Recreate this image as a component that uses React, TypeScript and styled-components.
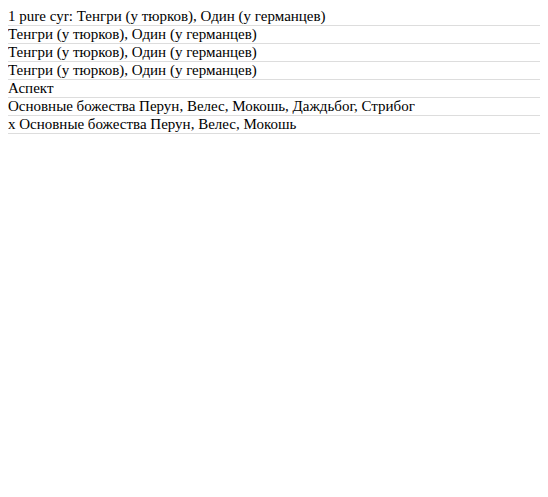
import React from "react";
import styled from "styled-components";

const A = styled.div`
  font-family: "Liberation Serif", serif;
  font-size: 15px;
  border-bottom: 1px solid #ddd;
`;

const B = styled.div`
  font-family: "Liberation Serif", "DejaVu Serif", serif;
  font-size: 15px;
  border-bottom: 1px solid #ddd;
`;

export default function App() {
  return (
    <div>
      <A>1 pure cyr: Тенгри (у тюрков), Один (у германцев)</A>
      <A>Тенгри (у тюрков), Один (у германцев)</A>
      <A lang="ru">Тенгри (у тюрков), Один (у германцев)</A>
      <B>Тенгри (у тюрков), Один (у германцев)</B>
      <A>Аспект</A>
      <A>Основные божества Перун, Велес, Мокошь, Даждьбог, Стрибог</A>
      <A>x Основные божества Перун, Велес, Мокошь</A>
    </div>
  );
}
